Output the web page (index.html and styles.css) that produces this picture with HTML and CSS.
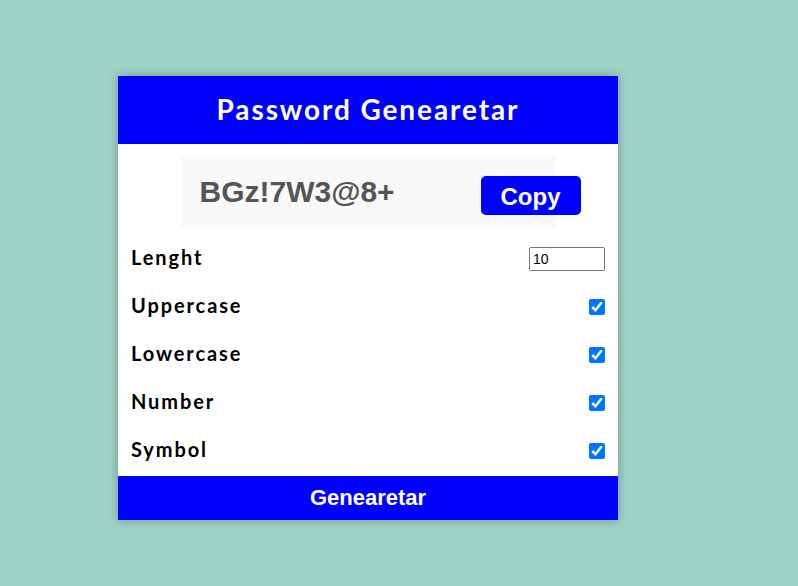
FILE: index.html
```html
<!DOCTYPE html>
<html lang="en">
<head>
    <meta charset="UTF-8">
    <meta name="viewport" content="width=device-width, initial-scale=1.0">
    <title>Password Genearetar</title>
    <link rel="stylesheet" href="styles.css">
</head>
<body>
    <div class="container">
        <h1>Password Genearetar</h1>

        <div class="result">
            <span id="result">BGz!7W3@8+</span>
            <button class="copy" id="copy">Copy</button>
        </div>

        <div class="settings">
            <div class="setting">
                <label for="length">Lenght</label>
                <input type="number" id="length" min="4" max="20" value="10">
            </div>
            <div class="setting">
                <label for="uppercase">Uppercase</label>
                <input type="checkbox" id="uppercase" checked>
            </div>
            <div class="setting">
                <label for="lowercase">Lowercase</label>
                <input type="checkbox" id="lowercase" checked>
            </div>
            <div class="setting">
                <label for="numbers">Number</label>
                <input type="checkbox" id="numbers" checked>
            </div>
            <div class="setting">
                <label for="symbols">Symbol</label>
                <input type="checkbox" id="symbols" checked>
            </div>
        </div>

        <button class="generate" id="generate">Genearetar</button>
    </div>
</body>
</html>
```

FILE: styles.css
```css
body {
    margin: 0;
    padding: 76px 0 0 118px;
    min-height: 100vh;
    box-sizing: border-box;
    background-color: #9fd3c7;
    font-family: "Lato", sans-serif;
}

.container {
    background-color: white;
    width: 500px;
    box-shadow: 0 0 10px rgba(0, 0, 0, 0.3);
}

.container h1 {
    margin: 0;
    height: 68px;
    line-height: 66px;
    background-color: #0000ff;
    color: white;
    font-size: 28px;
    font-weight: 700;
    text-align: center;
    letter-spacing: 1.9px;
}

.result {
    position: relative;
    width: 375px;
    height: 70px;
    margin: 13px auto 8px auto;
    background-color: #f9f9f9;
    display: flex;
    align-items: center;
}

#result {
    margin-left: 19px;
    font-family: "Liberation Sans", Arial, sans-serif;
    font-size: 30px;
    font-weight: bold;
    color: #555;
}

.copy {
    position: absolute;
    right: -25px;
    top: 19px;
    width: 100px;
    height: 39px;
    padding-top: 3px;
    border: none;
    border-radius: 5px;
    background-color: #0000ff;
    color: white;
    font-family: "Liberation Sans", Arial, sans-serif;
    font-size: 24px;
    font-weight: bold;
    cursor: pointer;
}

.settings {
    padding: 0 13px;
    margin-bottom: 1px;
}

.setting {
    height: 48px;
    display: flex;
    justify-content: space-between;
    align-items: center;
}

.setting label {
    margin-top: -4px;
    font-size: 20px;
    font-weight: 700;
    letter-spacing: 1.9px;
    color: #000;
}

.setting input[type="number"] {
    width: 76px;
    height: 24px;
    box-sizing: border-box;
    margin: 0;
    font-family: "Liberation Sans", Arial, sans-serif;
    font-size: 14px;
}

.setting input[type="checkbox"] {
    width: 16px;
    height: 16px;
    margin: 0;
}

.generate {
    display: block;
    width: 100%;
    height: 44px;
    border: none;
    background-color: #0000ff;
    color: white;
    font-family: "Liberation Sans", Arial, sans-serif;
    font-size: 22px;
    font-weight: bold;
    cursor: pointer;
}
```
